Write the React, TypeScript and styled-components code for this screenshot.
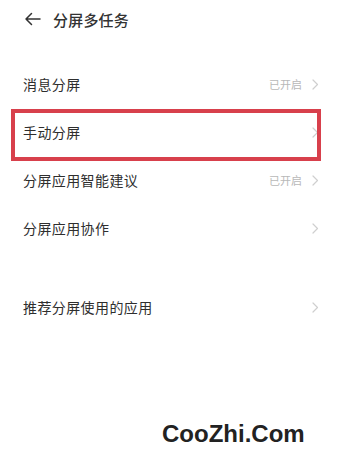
import styled, { createGlobalStyle } from 'styled-components'

const GlobalStyle = createGlobalStyle`
  html, body {
    margin: 0;
    padding: 0;
    background: #ffffff;
  }
  body {
    font-family: 'Noto Sans CJK SC', 'Noto Sans', sans-serif;
  }
`

interface Item {
  label: string
  status?: string
  highlighted?: boolean
}

const mainItems: Item[] = [
  { label: '消息分屏', status: '已开启' },
  { label: '手动分屏', highlighted: true },
  { label: '分屏应用智能建议', status: '已开启' },
  { label: '分屏应用协作' },
]

const extraItems: Item[] = [{ label: '推荐分屏使用的应用' }]

const Chevron = () => (
  <ChevronSvg width="7" height="11" viewBox="0 0 7 11">
    <path d="M1 1 L5.5 5.5 L1 10" fill="none" stroke="#cfcfcf" strokeWidth="1.2" strokeLinecap="round" strokeLinejoin="round" />
  </ChevronSvg>
)

const Row = ({ item }: { item: Item }) => (
  <RowWrap>
    <RowLabel>{item.label}</RowLabel>
    <RowRight>
      {item.status && <RowStatus>{item.status}</RowStatus>}
      <Chevron />
    </RowRight>
    {item.highlighted && <Highlight />}
  </RowWrap>
)

export default function App() {
  return (
    <Page>
      <GlobalStyle />
      <Header>
        <BackButton>
          <svg width="17" height="14" viewBox="0 0 17 14">
            <path d="M16 7 H2 M7.5 1.5 L2 7 L7.5 12.5" fill="none" stroke="#333" strokeWidth="1.5" strokeLinecap="round" strokeLinejoin="round" />
          </svg>
        </BackButton>
        <Title>分屏多任务</Title>
      </Header>

      <List>
        {mainItems.map((item) => (
          <Row key={item.label} item={item} />
        ))}
      </List>

      <List $gapTop>
        {extraItems.map((item) => (
          <Row key={item.label} item={item} />
        ))}
      </List>

      <Watermark>CooZhi.Com</Watermark>
    </Page>
  )
}

const Page = styled.div`
  position: relative;
  width: 341px;
  height: 462px;
  overflow: hidden;
  background: #ffffff;
`

const Header = styled.div`
  display: flex;
  align-items: center;
  height: 38px;
  padding-left: 24px;
`

const BackButton = styled.div`
  display: flex;
  align-items: center;
  width: 29px;
`

const Title = styled.div`
  font-size: 15px;
  font-weight: 500;
  color: #333333;
  letter-spacing: 0.2px;
`

const List = styled.div<{ $gapTop?: boolean }>`
  display: flex;
  flex-direction: column;
  margin-top: ${({ $gapTop }) => ($gapTop ? '31px' : '22px')};
`

const RowWrap = styled.div`
  position: relative;
  display: flex;
  align-items: center;
  justify-content: space-between;
  height: 48px;
  padding: 0 22px 0 23px;
`

const RowLabel = styled.span`
  font-size: 14px;
  color: #2e2e2e;
  letter-spacing: 0.4px;
`

const RowRight = styled.div`
  display: flex;
  align-items: center;
  gap: 10px;
`

const RowStatus = styled.span`
  font-size: 11px;
  color: #b8b8b8;
`

const ChevronSvg = styled.svg`
  display: block;
`

const Highlight = styled.div`
  position: absolute;
  top: 1px;
  bottom: -5px;
  left: 11px;
  right: 20px;
  border: 4px solid #d8404c;
  box-sizing: border-box;
  pointer-events: none;
`

const Watermark = styled.div`
  position: absolute;
  left: 162px;
  top: 420px;
  font-family: 'Liberation Sans', Arial, sans-serif;
  font-weight: 700;
  font-size: 24px;
  line-height: 27px;
  color: #222222;
`
